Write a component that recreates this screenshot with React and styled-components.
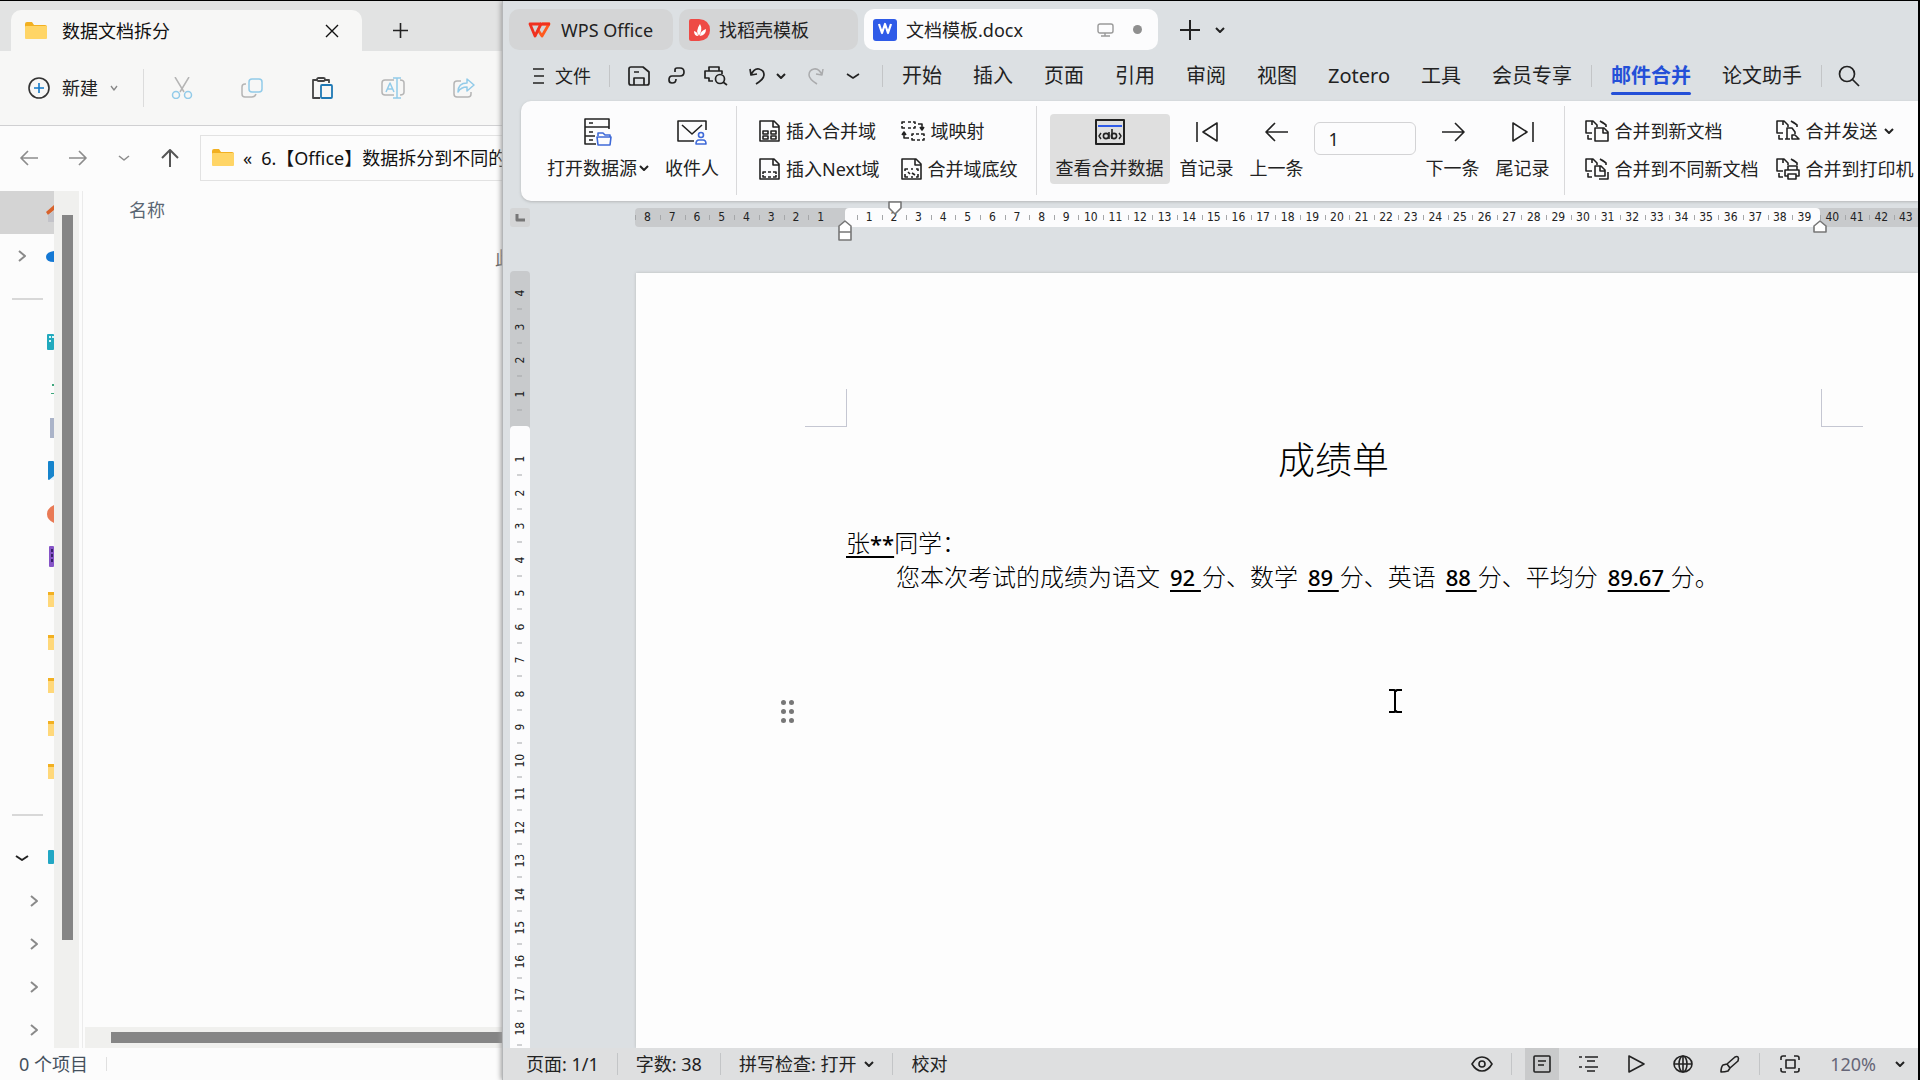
import React, { useState } from "react";
import styled, { createGlobalStyle } from "styled-components";

const GlobalStyle = createGlobalStyle`
  * {
    box-sizing: border-box;
  }
  body {
    margin: 0;
    background: #000;
    font-family: "Noto Sans", "Noto Sans CJK SC", sans-serif;
    font-size: 18px;
    line-height: 24px;
    color: #222;
  }
  button,
  input {
    font: inherit;
    color: inherit;
    background: none;
    border: 0;
    padding: 0;
    margin: 0;
    white-space: nowrap;
  }
  svg {
    display: block;
    flex: none;
    fill: none;
    stroke: currentColor;
  }
`;

/* ---------- icons ---------- */

const Svg = ({ w = 24, h = 24, sw = 2, children }) => (
  <svg
    width={w}
    height={h}
    viewBox={`0 0 ${w} ${h}`}
    strokeWidth={sw}
    strokeLinejoin="round"
    aria-hidden="true"
  >
    {children}
  </svg>
);

const Folder = () => (
  <Svg w={22} h={17}>
    <path d="M0 2q0-2 2-2h5l2 3h11q2 0 2 2v3H0z" fill="#f2b021" stroke="none" />
    <rect y="4" width="22" height="13" rx="1" fill="#ffd566" stroke="none" />
  </Svg>
);

const Caret = ({ w = 10, sw = 2 }) => (
  <Svg w={w} h={6} sw={sw}>
    <path d={`M1 1l${w / 2 - 1} 4 ${w / 2 - 1}-4`} />
  </Svg>
);

const ChevronRight = () => (
  <Svg w={10} h={14}>
    <path d="M2 2l6 5-6 5" />
  </Svg>
);

const Close = () => (
  <Svg w={14} h={14} sw={1.4}>
    <path d="M1 1l12 12M13 1L1 13" />
  </Svg>
);

const Plus = ({ w = 15, sw = 1.6 }) => (
  <Svg w={w} h={w} sw={sw}>
    <path d={`M${w / 2} 0v${w}M0 ${w / 2}h${w}`} />
  </Svg>
);

const Arrow = ({ back }) => (
  <Svg w={24} h={20} sw={1.6}>
    <path d={back ? "M23 10H1M10 1L1 10l9 9" : "M1 10h22M14 1l9 9-9 9"} />
  </Svg>
);

const SmallArrow = ({ back }) => (
  <Svg w={18} h={16} sw={1.7}>
    <path d={back ? "M18 8H1M8 1L1 8l7 7" : "M0 8h17M10 1l7 7-7 7"} />
  </Svg>
);

const ArrowUp = () => (
  <Svg w={18} h={18} sw={2}>
    <path d="M9 18V1M1 9l8-8 8 8" />
  </Svg>
);

const NewItem = () => (
  <Svg w={22} h={22} sw={1.6}>
    <circle cx="11" cy="11" r="10" stroke="#333" />
    <path d="M11 6v10M6 11h10" stroke="#1279c9" />
  </Svg>
);

const Cut = () => (
  <Svg w={22} h={22} sw={1.5}>
    <path d="M4 0l9 15M18 0L9 15" stroke="#b5b5b5" />
    <circle cx="5" cy="18" r="3.5" stroke="#92cbe9" />
    <circle cx="17" cy="18" r="3.5" stroke="#92cbe9" />
  </Svg>
);

const Copy = () => (
  <Svg w={22} h={20} sw={1.5}>
    <path d="M5 6H4q-3 0-3 3v7q0 3 3 3h7q3 0 4-3" stroke="#b5b5b5" />
    <rect x="8" y="1" width="13" height="13" rx="3" stroke="#92cbe9" />
  </Svg>
);

const Paste = () => (
  <Svg w={22} h={22} sw={1.8}>
    <path d="M6 3H2v18h7M14 3h4v3" stroke="#444" />
    <rect x="6" y="1" width="8" height="3" rx="1.5" stroke="#444" />
    <rect x="10" y="8" width="11" height="13" rx="1" stroke="#1e78b4" />
  </Svg>
);

const Rename = () => (
  <Svg w={24} h={22} sw={1.5}>
    <path d="M13 3H4Q1 3 1 6v9q0 3 3 3h9M19 3q4 0 4 3v9q0 3-4 3" stroke="#b5b5b5" />
    <path d="M5 15l4-9 4 9M6 12h6" stroke="#92cbe9" />
    <path d="M16 1v20M12 1h8M12 21h8" stroke="#92cbe9" />
  </Svg>
);

const Share = () => (
  <Svg w={22} h={20} sw={1.5}>
    <path d="M8 3H4Q1 3 1 6v10q0 3 3 3h11q3 0 3-3v-2" stroke="#b5b5b5" />
    <path d="M14 1l7 6-7 6v-4q-6 0-9 5 0-9 9-9z" stroke="#92cbe9" />
  </Svg>
);

const WpsLogo = () => (
  <Svg w={24} h={16} sw={2.8}>
    <path d="M10 8l4 6 7-12h-7" stroke="#ff5a1f" />
    <path d="M13 2H2l5 12 6-12" stroke="#f0301f" />
    <path d="M12 2h10" stroke="#f0301f" />
  </Svg>
);

const DocerLogo = () => (
  <Svg w={21} h={22}>
    <path d="M2 0h8q11 1 11 11T10 22H2q-2 0-2-2V2q0-2 2-2z" fill="#ee4a45" stroke="none" />
    <path d="M10 17q-4-5 1-12 3 5-1 12zM9 17q-4 0-4-5 4 1 4 5zM11 17q0-5 6-7 0 6-6 7z" fill="#fff" stroke="none" />
  </Svg>
);

const WriterLogo = () => (
  <Svg w={24} h={22}>
    <rect width="24" height="22" rx="3" fill="#2f5be8" stroke="none" />
    <path d="M6 5l3 9 3-9 3 9 3-9" stroke="#fff" strokeWidth="2.2" />
  </Svg>
);

const Monitor = () => (
  <Svg w={17} h={14} sw={1.4}>
    <rect x="1" y="1" width="15" height="9" rx="2" />
    <path d="M8 10v3M4 13h9" />
  </Svg>
);

const Hamburger = () => (
  <Svg w={13} h={16} sw={1.5}>
    <path d="M1 1h11M2 8h10M1 15h11" />
  </Svg>
);

const Save = () => (
  <Svg w={22} h={20} sw={1.7}>
    <path d="M3 1h12l6 5v11q0 2-2 2H3q-2 0-2-2V3q0-2 2-2z" />
    <path d="M6 19v-7h10v7M6 6h5" />
  </Svg>
);

const Export = () => (
  <Svg w={18} h={18} sw={1.7}>
    <path d="M7 5V3q0-2 2-2h3q4 0 4 4t-4 4H4q-3 0-3 4 0 3 3 3 4 0 4-4" />
  </Svg>
);

const Preview = () => (
  <Svg w={24} h={20} sw={1.7}>
    <path d="M5 5V1h10v4M9 15H5v-3H1V5h17v3" />
    <circle cx="16" cy="13" r="4.5" />
    <path d="M19 16l4 3" />
  </Svg>
);

const Undo = () => (
  <Svg w={16} h={18} sw={1.7}>
    <path d="M1 2l1 6 6-1M2 8q3-7 8-6 5 1 5 6 0 4-8 9" />
  </Svg>
);

const Redo = () => (
  <Svg w={16} h={18} sw={1.5}>
    <path d="M15 2l-1 6-6-1M14 8q-3-7-8-6-5 1-5 6 0 4 8 9" />
  </Svg>
);

const Search = () => (
  <Svg w={22} h={22} sw={1.7}>
    <circle cx="9" cy="9" r="7.5" />
    <path d="M14 14l7 7" />
  </Svg>
);

const DataSource = () => (
  <Svg w={28} h={28} sw={1.6}>
    <path d="M25 11V1H1v25h11M1 9h24M1 18h10M5 5h4M5 14h4M5 22h4" />
    <path d="M14 18v-3h5l2 2h5v2M13 19h14l-1 8H14z" stroke="#3f6ad8" />
  </Svg>
);

const Recipients = () => (
  <Svg w={30} h={26} sw={1.6}>
    <path d="M29 11V2H1v20h16M5 6l10 9 10-9" />
    <circle cx="24" cy="16" r="2.5" stroke="#3f6ad8" />
    <path d="M19 25q0-4 3-4h4q3 0 3 4z" stroke="#3f6ad8" />
  </Svg>
);

const SheetOutline = <path d="M1 1h14l5 5v15H1zM14 1v6h6" />;

const MergeField = () => (
  <Svg w={21} h={22} sw={1.6}>
    {SheetOutline}
    <path d="M4 11h5v3H4zM12 11h5v3h-5zM4 16h5v3H4zM12 16h5v3h-5z" />
  </Svg>
);

const NextField = () => (
  <Svg w={21} h={22} sw={1.6}>
    {SheetOutline}
    <path d="M4 16v-2h3M9 14h3M14 14h3v2M4 17v2h3M9 19h3M14 19h3v-2" />
  </Svg>
);

const Shading = () => (
  <Svg w={21} h={22} sw={1.6}>
    {SheetOutline}
    <path d="M4 13v-2h3M10 11h2M15 11h2v2M4 16v3h3M10 19h2M15 19h2v-3M7 14l2 2M11 15l3 2" />
  </Svg>
);

const MapField = () => (
  <Svg w={24} h={20} sw={1.6}>
    <path d="M4 1H1v2M7 1h3M12 1h2v2M1 5v2h3M7 7h3M12 7h2V5M17 3h4v5M19 6l2 3 2-3" />
    <path d="M13 13h-2v2M15 13h3M20 13h3v2M11 17v2h3M16 19h3M21 19h2v-2M8 17H3v-5M1 14l2-3 2 3" />
  </Svg>
);

const ViewMerged = () => (
  <Svg w={30} h={26} sw={2}>
    <rect x="1" y="1" width="28" height="24" />
    <path d="M3 7h24" stroke="#2f5be8" />
    <path d="M6 14l-2 3 2 3M24 14l2 3-2 3" strokeWidth="1.4" />
    <circle cx="11" cy="17" r="2.6" strokeWidth="1.6" />
    <path d="M14 13v7M17 10v10" strokeWidth="1.6" />
    <circle cx="19" cy="17" r="2.6" strokeWidth="1.6" />
  </Svg>
);

const FirstRecord = () => (
  <Svg w={22} h={20} sw={1.6}>
    <path d="M1 0v20M21 1v18L7 10z" />
  </Svg>
);

const LastRecord = () => (
  <Svg w={22} h={20} sw={1.6}>
    <path d="M21 0v20M1 1v18l14-9z" />
  </Svg>
);

const MergeBase = (
  <path d="M7 13H1V1h7l4 4v2M7 1v4M17 2l4 3v2M3 15v4h4M15 1l3 2" />
);

const MergeNew = () => (
  <Svg w={24} h={22} sw={1.6}>
    {MergeBase}
    <path d="M10 8h9l4 4v9H10zM18 8v5h5" />
  </Svg>
);

const MergeSplit = () => (
  <Svg w={24} h={22} sw={1.6}>
    {MergeBase}
    <path d="M10 8h6l4 4v6H10zM15 8v5h5M23 14v7H14" />
  </Svg>
);

const MergeSend = () => (
  <Svg w={24} h={22} sw={1.6}>
    {MergeBase}
    <path d="M11 19V8h5l3 4v2M9 19h5M16 15v4h7l-4-4z" />
  </Svg>
);

const MergePrint = () => (
  <Svg w={24} h={22} sw={1.6}>
    {MergeBase}
    <path d="M12 12V8h9v4M12 18H9v-6h14v6h-3M12 16h8v5h-8z" />
  </Svg>
);

const Eye = () => (
  <Svg w={22} h={16} sw={1.6}>
    <path d="M1 8q4-7 10-7t10 7q-4 7-10 7T1 8z" />
    <circle cx="11" cy="8" r="3" />
  </Svg>
);

const PageView = () => (
  <Svg w={18} h={18} sw={1.6}>
    <rect x="1" y="1" width="16" height="16" rx="1" />
    <path d="M5 6h8M5 10h6" />
  </Svg>
);

const Outline = () => (
  <Svg w={20} h={16} sw={1.7}>
    <path d="M0 1h3M6 1h13M8 5h8M0 11h3M6 11h13M8 15h8" />
  </Svg>
);

const Play = () => (
  <Svg w={17} h={18} sw={1.6}>
    <path d="M1 1v16l15-8z" />
  </Svg>
);

const Globe = () => (
  <Svg w={20} h={18} sw={1.6}>
    <ellipse cx="10" cy="9" rx="9" ry="8" />
    <ellipse cx="10" cy="9" rx="4" ry="8" />
    <path d="M1 9h18M10 1v16" />
  </Svg>
);

const Pen = () => (
  <Svg w={20} h={18} sw={1.6}>
    <path d="M1 17q0-5 2-7l4-1 3 4-2 3q-3 1-7 1zM7 9l8-7q2-1 3 0t0 4l-8 7M7 9l3 4" />
  </Svg>
);

const Focus = () => (
  <Svg w={20} h={18} sw={1.6}>
    <path d="M1 5V3q0-2 2-2h3M14 1h3q2 0 2 2v2M19 13v2q0 2-2 2h-3M6 17H3q-2 0-2-2v-2" />
    <rect x="6" y="5" width="9" height="8" />
  </Svg>
);

const IBeam = () => (
  <Svg w={15} h={24} sw={2}>
    <path d="M1 1h5l2 1 1-1h5M1 23h5l2-1 1 1h5M7 2v20" />
  </Svg>
);

/* ---------- data ---------- */

const sidebarRows = [
  { kind: "home", selected: true },
  { kind: "cloud", arrow: "right" },
  { rule: true },
  { kind: "desktop" },
  { kind: "download" },
  { kind: "document" },
  { kind: "picture" },
  { kind: "music" },
  { kind: "video" },
  { kind: "folder" },
  { kind: "folder" },
  { kind: "folder" },
  { kind: "folder" },
  { kind: "folder" },
  { rule: true },
  { kind: "pc", arrow: "down" },
  { arrow: "right", nested: true },
  { arrow: "right", nested: true },
  { arrow: "right", nested: true },
  { arrow: "right", nested: true },
];

const menus = ["开始", "插入", "页面", "引用", "审阅", "视图", "Zotero", "工具", "会员专享"];

const range = (from, to) => {
  const step = from < to ? 1 : -1;
  const list = [];
  for (let n = from; n !== to + step; n += step) list.push(n);
  return list;
};

/* ---------- file explorer ---------- */

const SideIcon = ({ kind }) => (
  <Svg w={8} h={24}>
    <g stroke="none">
      {kind === "home" && (
        <>
          <path d="M0 11l8-7v5l-6 5z" fill="#d8622b" />
          <path d="M2 14l6-4v11H2z" fill="#c3c3c9" />
        </>
      )}
      {kind === "cloud" && <path d="M8 7Q0 8 0 13t8 5z" fill="#1478d4" />}
      {kind === "desktop" && (
        <>
          <rect x="1" y="4" width="7" height="16" rx="1" fill="#21a9bd" />
          <path d="M3 6h2v2H3zM3 10h2v2H3zM6 6h2v2H6z" fill="#d8f6f8" />
        </>
      )}
      {kind === "download" && <path d="M6 11h2v2H6zM5 20h3v1H5z" fill="#3fa77c" />}
      {kind === "document" && <rect x="4" y="2" width="4" height="20" fill="#aab3c8" />}
      {kind === "picture" && (
        <>
          <rect x="2" y="2" width="6" height="19" rx="1" fill="#1684cc" />
          <path d="M3 21l5-4v4z" fill="#e6f5ff" />
        </>
      )}
      {kind === "music" && <path d="M8 3Q1 6 1 12t7 9z" fill="#e97a55" />}
      {kind === "video" && (
        <>
          <rect x="3" y="1" width="5" height="21" rx="1" fill="#8654c7" />
          <path d="M5 4h2v3H5zM5 9h2v3H5zM5 14h2v3H5z" fill="#38206b" />
        </>
      )}
      {kind === "folder" && (
        <>
          <rect x="2" y="4" width="6" height="4" fill="#f2b021" />
          <rect x="2" y="7" width="6" height="12" fill="#ffd87a" />
        </>
      )}
      {kind === "pc" && <rect x="2" y="4" width="6" height="14" rx="1" fill="#22a7c4" />}
    </g>
  </Svg>
);

const Explorer = () => (
  <ExplorerWindow>
    <ExplorerTabs>
      <ExplorerTab>
        <Folder />
        <TabTitle>数据文档拆分</TabTitle>
        <button aria-label="关闭标签页">
          <Close />
        </button>
      </ExplorerTab>
      <NewTab aria-label="新标签页">
        <Plus />
      </NewTab>
    </ExplorerTabs>
    <ExplorerTools>
      <NewButton>
        <NewItem />
        新建
        <Caret w={8} sw={1.3} />
      </NewButton>
      <ToolRow>
        <button aria-label="剪切"><Cut /></button>
        <button aria-label="复制"><Copy /></button>
        <button aria-label="粘贴"><Paste /></button>
        <button aria-label="重命名"><Rename /></button>
        <button aria-label="共享"><Share /></button>
      </ToolRow>
    </ExplorerTools>
    <AddressRow>
      <NavButton aria-label="后退"><SmallArrow back /></NavButton>
      <NavButton aria-label="前进"><SmallArrow /></NavButton>
      <NavButton aria-label="最近"><Caret w={12} sw={1.6} /></NavButton>
      <NavButton aria-label="上移" $dark><ArrowUp /></NavButton>
      <Address>
        <Folder />
        <span>«</span>
        <span>6.【Office】数据拆分到不同的文档</span>
      </Address>
    </AddressRow>
    <ExplorerBody>
      <Sidebar>
        {sidebarRows.map((row, i) => (
          <SideRow key={i} $selected={row.selected} $nested={row.nested}>
            {row.rule && <SideRule />}
            {row.arrow && (
              <Twist $dark={row.arrow === "down"}>
                {row.arrow === "down" ? <Caret w={14} /> : <ChevronRight />}
              </Twist>
            )}
            {row.kind && (
              <SideKind>
                <SideIcon kind={row.kind} />
              </SideKind>
            )}
          </SideRow>
        ))}
      </Sidebar>
      <SideScroll>
        <SideThumb />
      </SideScroll>
      <FilePane>
        <ColumnHead>名称</ColumnHead>
        <EmptyNote>此文件夹为空。</EmptyNote>
        <PaneScroll>
          <PaneThumb />
        </PaneScroll>
      </FilePane>
    </ExplorerBody>
    <ExplorerStatus>
      0 个项目
      <StatusTick />
    </ExplorerStatus>
  </ExplorerWindow>
);

/* ---------- writer ---------- */

const BigTool = ({ icon, label, caret, active }) => (
  <BigButton $active={active}>
    <BigIcon>{icon}</BigIcon>
    <BigLabel>
      {label}
      {caret && <Caret />}
    </BigLabel>
  </BigButton>
);

const SmallTool = ({ icon, label, caret }) => (
  <SmallButton>
    {icon}
    <span>{label}</span>
    {caret && <Caret />}
  </SmallButton>
);

const Ribbon = () => {
  const [record, setRecord] = useState("1");

  return (
    <RibbonPanel>
      <Group $gap={4} $left={20} $right={11}>
        <BigTool icon={<DataSource />} label="打开数据源" caret />
        <BigTool icon={<Recipients />} label="收件人" />
      </Group>
      <Group $gap={21} $left={22} $right={18}>
        <Stack>
          <SmallTool icon={<MergeField />} label="插入合并域" />
          <SmallTool icon={<NextField />} label="插入Next域" />
        </Stack>
        <Stack>
          <SmallTool icon={<MapField />} label="域映射" />
          <SmallTool icon={<Shading />} label="合并域底纹" />
        </Stack>
      </Group>
      <Group $gap={4} $left={13} $right={8}>
        <BigTool icon={<ViewMerged />} label="查看合并数据" active />
        <BigTool icon={<FirstRecord />} label="首记录" />
        <BigTool icon={<Arrow back />} label="上一条" />
        <RecordInput
          aria-label="记录编号"
          value={record}
          onChange={(e) => setRecord(e.target.value)}
        />
        <BigTool icon={<Arrow />} label="下一条" />
        <BigTool icon={<LastRecord />} label="尾记录" />
      </Group>
      <Group $gap={17} $left={20} $right={0}>
        <Stack>
          <SmallTool icon={<MergeNew />} label="合并到新文档" />
          <SmallTool icon={<MergeSplit />} label="合并到不同新文档" />
        </Stack>
        <Stack>
          <SmallTool icon={<MergeSend />} label="合并发送" caret />
          <SmallTool icon={<MergePrint />} label="合并到打印机" />
        </Stack>
      </Group>
    </RibbonPanel>
  );
};

const HorizontalRuler = () => (
  <RulerRow>
    <TabStop aria-label="制表位">
      <Svg w={10} h={8} sw={3}>
        <path d="M2 0v6h8" />
      </Svg>
    </TabStop>
    <Ruler>
      <RulerPart $size="210px" $pad="0 12px 0 0">
        {range(8, 1).map((n) => (
          <Mark key={n}>{n}</Mark>
        ))}
      </RulerPart>
      <RulerPart $white $pad="0 3px 0 12px">
        {range(1, 39).map((n) => (
          <Mark key={n}>{n}</Mark>
        ))}
        <Indent $left={42} $top={-7}>
          <Svg w={16} h={14} sw={1.6}>
            <path d="M2 1h12v6l-6 6-6-6z" fill="#fff" />
          </Svg>
        </Indent>
        <Indent $left={-8} $top={12}>
          <Svg w={16} h={22} sw={1.6}>
            <path d="M8 1l6 5v6H2V6zM2 12h12v8H2z" fill="#fff" />
          </Svg>
        </Indent>
        <Indent $right={-8} $top={12}>
          <Svg w={16} h={13} sw={1.6}>
            <path d="M8 1l6 5v6H2V6z" fill="#fff" />
          </Svg>
        </Indent>
      </RulerPart>
      <RulerPart $size="98px" $pad="0">
        {range(40, 43).map((n) => (
          <Mark key={n}>{n}</Mark>
        ))}
      </RulerPart>
    </Ruler>
  </RulerRow>
);

const VerticalRuler = () => (
  <SideRuler>
    <SideRulerPart $size="155px" $pad="5px 0 16px">
      {range(4, 1).map((n) => (
        <SideMark key={n}>{n}</SideMark>
      ))}
    </SideRulerPart>
    <SideRulerPart $white $pad="16px 0 3px">
      {range(1, 18).map((n) => (
        <SideMark key={n}>{n}</SideMark>
      ))}
    </SideRulerPart>
  </SideRuler>
);

const Writer = () => (
  <WriterWindow>
    <WriterTabs>
      <WriterTab $width={164} $pad={19}>
        <WpsLogo />
        <span>WPS Office</span>
      </WriterTab>
      <WriterTab $width={179} $pad={10}>
        <DocerLogo />
        <span>找稻壳模板</span>
      </WriterTab>
      <WriterTab $width={294} $pad={9} $active>
        <WriterLogo />
        <TabTitle>文档模板.docx</TabTitle>
        <Muted>
          <Monitor />
          <Unsaved />
        </Muted>
      </WriterTab>
      <AddTab aria-label="新建标签">
        <Plus w={20} sw={2} />
      </AddTab>
      <AddTab aria-label="标签列表">
        <Caret />
      </AddTab>
    </WriterTabs>

    <MenuBar>
      <FileButton>
        <Hamburger />
        文件
      </FileButton>
      <Rule />
      <QuickTools>
        <button aria-label="保存"><Save /></button>
        <button aria-label="输出"><Export /></button>
        <button aria-label="打印预览"><Preview /></button>
      </QuickTools>
      <HistoryTools>
        <button aria-label="撤销"><Undo /></button>
        <button aria-label="撤销列表"><Caret /></button>
        <Faded aria-label="恢复"><Redo /></Faded>
        <button aria-label="更多"><Caret w={14} sw={1.6} /></button>
      </HistoryTools>
      <Rule />
      <MenuGroup>
        {menus.map((name) => (
          <MenuItem key={name}>{name}</MenuItem>
        ))}
      </MenuGroup>
      <Rule />
      <MenuGroup>
        <MenuItem $active>邮件合并</MenuItem>
        <MenuItem>论文助手</MenuItem>
      </MenuGroup>
      <Rule />
      <SearchButton aria-label="搜索">
        <Search />
      </SearchButton>
    </MenuBar>

    <Ribbon />
    <HorizontalRuler />

    <Workspace>
      <VerticalRuler />
      <Page>
        <Corners>
          <Corner $side="right" />
          <Corner $side="left" />
        </Corners>
        <Title>成绩单</Title>
        <Line>
          <u>
            张<b>**</b>
          </u>
          同学：
        </Line>
        <Line $indent>
          您本次考试的成绩为语文<Score>92 </Score>分、数学<Score>89 </Score>
          分、英语<Score>88 </Score>分、平均分<Score>89.67 </Score>分。
        </Line>
        <DragHandle>
          {range(1, 6).map((n) => (
            <i key={n} />
          ))}
        </DragHandle>
        <Pointer>
          <IBeam />
        </Pointer>
      </Page>
    </Workspace>

    <StatusBar>
      <StatusText>页面: 1/1</StatusText>
      <Rule />
      <StatusText>字数: 38</StatusText>
      <Rule />
      <StatusText>
        拼写检查: 打开
        <Caret />
      </StatusText>
      <Rule />
      <StatusText>校对</StatusText>
      <Spacer />
      <StatusIcon aria-label="护眼模式"><Eye /></StatusIcon>
      <Rule $gap={6} />
      <StatusIcon aria-label="页面视图" $active><PageView /></StatusIcon>
      <StatusIcon aria-label="大纲"><Outline /></StatusIcon>
      <StatusIcon aria-label="放映"><Play /></StatusIcon>
      <StatusIcon aria-label="Web 版式"><Globe /></StatusIcon>
      <StatusIcon aria-label="写作模式"><Pen /></StatusIcon>
      <Rule $gap={6} />
      <StatusIcon aria-label="最佳显示"><Focus /></StatusIcon>
      <Zoom>
        <span>120%</span>
        <Caret />
      </Zoom>
    </StatusBar>
  </WriterWindow>
);

const App = () => (
  <>
    <GlobalStyle />
    <Desktop>
      <Explorer />
      <Writer />
    </Desktop>
  </>
);

const Desktop = styled.div`
  display: flex;
  height: 100vh;
  padding: 1px 2px 0 0;
  overflow: hidden;
  background: #000;
`;

const ExplorerWindow = styled.section`
  display: flex;
  flex-direction: column;
  flex: 0 0 502px;
  min-width: 0;
  overflow: hidden;
  background: #fcfcfc;
`;

const ExplorerTabs = styled.div`
  display: flex;
  height: 50px;
  padding: 9px 0 0 11px;
  background: #e2e3e3;
`;

const ExplorerTab = styled.div`
  display: flex;
  align-items: center;
  width: 351px;
  padding: 0 23px 0 14px;
  gap: 15px;
  border-radius: 10px 10px 0 0;
  background: #f7f7f6;
  color: #111;
`;

const TabTitle = styled.span`
  flex: 1;
  white-space: nowrap;
`;

const NewTab = styled.button`
  display: flex;
  align-items: center;
  padding: 0 31px;
`;

const ExplorerTools = styled.div`
  display: flex;
  align-items: center;
  height: 75px;
  padding-left: 28px;
  background: #f7f7f6;
  border-bottom: 1px solid #d0d0d2;
`;

const NewButton = styled.button`
  display: flex;
  align-items: center;
  gap: 12px;
  height: 38px;
  padding-right: 25px;
  border-right: 1px solid #dcdcdc;
  svg:last-child {
    color: #888;
  }
`;

const ToolRow = styled.div`
  display: flex;
  gap: 48px;
  padding-left: 27px;
`;

const AddressRow = styled.div`
  display: flex;
  align-items: center;
  height: 65px;
  padding: 0 0 2px 20px;
`;

const NavButton = styled.button`
  display: flex;
  align-items: center;
  flex: 0 0 auto;
  margin-right: ${(p) => (p.$dark ? 21 : 31)}px;
  color: ${(p) => (p.$dark ? "#555" : "#8c8c8c")};
`;

const Address = styled.div`
  display: flex;
  align-items: center;
  flex: 1 0 auto;
  gap: 9px;
  height: 46px;
  padding-left: 11px;
  border: 1px solid #e2e2e2;
  color: #111;
  white-space: nowrap;
`;

const ExplorerBody = styled.div`
  display: flex;
  flex: 1;
  min-height: 0;
`;

const Sidebar = styled.nav`
  width: 54px;
  overflow: hidden;
`;

const SideRow = styled.div`
  display: flex;
  align-items: center;
  height: 43px;
  padding-left: ${(p) => (p.$nested ? 29 : 0)}px;
  background: ${(p) => (p.$selected ? "#d4d4d4" : "transparent")};
`;

const SideRule = styled.hr`
  width: 31px;
  margin: 0 0 0 12px;
  border: 0;
  border-top: 2px solid #d8d8d8;
`;

const Twist = styled.span`
  ${SideRow} > &:not(:last-child) {
    padding-left: ${(p) => (p.$dark ? 15 : 17)}px;
  }
  color: ${(p) => (p.$dark ? "#222" : "#8a8a8a")};
`;

const SideKind = styled.span`
  margin-left: auto;
`;

const SideScroll = styled.div`
  width: 25px;
  padding: 24px 6px 0 8px;
  background: #f0f0ee;
`;

const SideThumb = styled.div`
  height: 87%;
  background: #858585;
`;

const FilePane = styled.div`
  display: flex;
  flex-direction: column;
  flex: 1;
  min-width: 0;
  margin-left: 3px;
  border-left: 1px solid #ebebeb;
`;

const ColumnHead = styled.div`
  padding: 7px 0 0 46px;
  color: #5a6673;
`;

const EmptyNote = styled.div`
  flex: 1;
  padding: 24px 0 0 412px;
  white-space: nowrap;
  overflow: hidden;
  color: #666;
`;

const PaneScroll = styled.div`
  height: 21px;
  padding: 5px 0 5px 26px;
  margin-left: 2px;
  background: #f0f0ee;
`;

const PaneThumb = styled.div`
  height: 11px;
  background: #858585;
`;

const ExplorerStatus = styled.footer`
  display: flex;
  align-items: center;
  gap: 18px;
  height: 32px;
  padding-left: 19px;
  color: #44505c;
`;

const StatusTick = styled.i`
  width: 1px;
  height: 14px;
  background: #e0e0e0;
`;

const WriterWindow = styled.main`
  position: relative;
  display: flex;
  flex-direction: column;
  flex: 1;
  min-width: 0;
  overflow: hidden;
  background: #dce0e3;
  border-left: 1px solid #b4b6b8;
  clip-path: inset(0 0 0 -8px);
  box-shadow: -1px 0 5px #9a9a9a;
`;

const WriterTabs = styled.div`
  display: flex;
  align-items: center;
  gap: 6px;
  height: 57px;
  padding: 0 0 0 6px;
`;

const WriterTab = styled.div`
  display: flex;
  align-items: center;
  gap: 9px;
  width: ${(p) => p.$width}px;
  height: 41px;
  padding: 0 16px 0 ${(p) => p.$pad}px;
  border-radius: 10px;
  background: ${(p) => (p.$active ? "#fcfcfd" : "#d4d5d6")};
  white-space: nowrap;
`;

const Muted = styled.span`
  display: flex;
  align-items: center;
  gap: 19px;
  color: #999;
`;

const Unsaved = styled.i`
  width: 9px;
  height: 9px;
  border-radius: 50%;
  background: #8f8f8f;
`;

const AddTab = styled.button`
  display: flex;
  align-items: center;
  padding-left: 16px;
  & + & {
    padding-left: 9px;
  }
`;

const MenuBar = styled.nav`
  display: flex;
  align-items: center;
  height: 43px;
  padding: 0 0 7px 29px;
`;

const Rule = styled.i`
  flex: 0 0 1px;
  height: 22px;
  margin: 0 ${(p) => p.$gap || 0}px;
  background: #c3c5c7;
`;

const FileButton = styled.button`
  display: flex;
  align-items: center;
  gap: 10px;
  padding-right: 18px;
`;

const QuickTools = styled.div`
  display: flex;
  align-items: center;
  gap: 18px;
  padding-left: 18px;
`;

const HistoryTools = styled.div`
  display: flex;
  align-items: center;
  padding: 0 22px 0 21px;
  gap: 11px;
  button:nth-child(n + 3) {
    padding-left: 11px;
  }
`;

const Faded = styled.button`
  color: #aaabad;
`;

const MenuGroup = styled.div`
  display: flex;
  gap: 31px;
  padding: 0 19px;
`;

const MenuItem = styled.button`
  position: relative;
  font-size: 20px;
  line-height: 30px;
  color: ${(p) => (p.$active ? "#2450d8" : "inherit")};
  font-weight: ${(p) => (p.$active ? 700 : 400)};
  &::after {
    content: "";
    display: ${(p) => (p.$active ? "block" : "none")};
    position: absolute;
    left: 0;
    right: 0;
    bottom: -4px;
    height: 3px;
    border-radius: 2px;
    background: #2450d8;
  }
`;

const SearchButton = styled.button`
  padding-left: 16px;
`;

const RibbonPanel = styled.div`
  display: flex;
  height: 100px;
  margin-left: 18px;
  overflow: hidden;
  border-radius: 10px 0 0 10px;
  background: #fcfcfd;
  box-shadow: 0 1px 3px #b5b7b9;
`;

const Group = styled.div`
  display: flex;
  align-items: flex-start;
  flex: none;
  gap: ${(p) => p.$gap}px;
  margin-top: 5px;
  height: 89px;
  padding: 8px ${(p) => p.$right}px 0 ${(p) => p.$left}px;
  border-right: 1px solid #d9d9db;
  &:last-child {
    border-right: 0;
  }
`;

const BigButton = styled.button`
  display: flex;
  flex-direction: column;
  align-items: center;
  height: 70px;
  padding: 0 6px;
  border-radius: 4px;
  background: ${(p) => (p.$active ? "#dfdfdf" : "none")};
`;

const BigIcon = styled.span`
  display: flex;
  align-items: center;
  height: 35px;
`;

const BigLabel = styled.span`
  display: flex;
  align-items: center;
  gap: 2px;
  padding-top: 7px;
`;

const Stack = styled.div`
  display: flex;
  flex-direction: column;
  gap: 14px;
  padding-top: 5px;
`;

const SmallButton = styled.button`
  display: flex;
  align-items: center;
  gap: 6px;
  height: 24px;
`;

const RecordInput = styled.input`
  width: 102px;
  height: 33px;
  margin-top: 8px;
  padding-left: 14px;
  border: 1px solid #d3d3d5;
  border-radius: 6px;
`;

const RulerRow = styled.div`
  display: flex;
  padding: 7px 0 0 7px;
`;

const TabStop = styled.button`
  display: flex;
  align-items: center;
  justify-content: center;
  width: 20px;
  height: 19px;
  margin-right: 105px;
  border-radius: 3px;
  background: #d4d5d6;
  color: #777;
`;

const Ruler = styled.div`
  display: flex;
  flex: 1;
  font-family: "DejaVu Sans Condensed", "DejaVu Sans", sans-serif;
  font-size: 12px;
  line-height: 19px;
  background: #c8cacc;
  border-radius: 4px 0 0 4px;
`;

const RulerPart = styled.div`
  position: relative;
  display: flex;
  flex: ${(p) => (p.$size ? `0 0 ${p.$size}` : "1")};
  padding: ${(p) => p.$pad};
  border-radius: 4px;
  background: ${(p) => (p.$white ? "#fcfcfd" : "none")};
`;

const Mark = styled.span`
  flex: 1 1 0;
  min-width: 0;
  text-align: center;
  background: linear-gradient(#a5a7a9, #a5a7a9) left center / 1px 5px no-repeat;
`;

const Indent = styled.span`
  position: absolute;
  z-index: 1;
  top: ${(p) => p.$top}px;
  left: ${(p) => (p.$left === undefined ? "auto" : `${p.$left}px`)};
  right: ${(p) => (p.$right === undefined ? "auto" : `${p.$right}px`)};
  color: #777;
`;

const Workspace = styled.div`
  display: flex;
  flex: 1;
  min-height: 0;
  padding: 44px 0 0 7px;
`;

const SideRuler = styled.div`
  display: flex;
  flex-direction: column;
  width: 20px;
  margin-right: 106px;
  border-radius: 4px 4px 0 0;
  background: #c8cacc;
  font-family: "DejaVu Sans Condensed", "DejaVu Sans", sans-serif;
  font-size: 12px;
  line-height: 20px;
`;

const SideRulerPart = styled.div`
  display: flex;
  flex-direction: column;
  flex: ${(p) => (p.$size ? `0 0 ${p.$size}` : "1")};
  padding: ${(p) => p.$pad};
  border-radius: 4px 4px 0 0;
  background: ${(p) => (p.$white ? "#fcfcfd" : "none")};
`;

const SideMark = styled.span`
  flex: 1 1 0;
  min-height: 0;
  width: 20px;
  text-align: center;
  writing-mode: vertical-rl;
  transform: rotate(180deg);
  background: linear-gradient(#a5a7a9, #a5a7a9) center top / 5px 1px no-repeat;
`;

const Page = styled.article`
  position: relative;
  flex: 1;
  margin-top: 2px;
  padding: 116px 97px 0 210px;
  background: #fdfdfd;
  box-shadow: 0 0 3px #b8babc;
  color: #000;
`;

const Corners = styled.div`
  display: flex;
  justify-content: space-between;
  margin: 0 -42px 0 -41px;
`;

const Corner = styled.i`
  width: 42px;
  height: 38px;
  border-bottom: 1px solid #c5c7d2;
  border-${(p) => p.$side}: 1px solid #c5c7d2;
`;

const Title = styled.h1`
  margin: 0 0 41px;
  padding-top: 8px;
  font-size: 37px;
  line-height: 50px;
  font-weight: 300;
  text-align: center;
`;

const Line = styled.p`
  margin: 0;
  padding-left: ${(p) => (p.$indent ? 50 : 0)}px;
  font-size: 24px;
  line-height: 34px;
  font-weight: 300;
  white-space: nowrap;
  u {
    text-decoration-thickness: 2px;
    text-underline-offset: 4px;
  }
  b {
    font-size: 22px;
    font-weight: 500;
  }
`;

const Score = styled.u`
  margin: 0 1px 0 10px;
  font-size: 22px;
  font-weight: 500;
  white-space: pre;
`;

const DragHandle = styled.span`
  position: absolute;
  left: 145px;
  top: 427px;
  display: grid;
  grid-template-columns: 5px 5px;
  gap: 4px 3px;
  i {
    height: 5px;
    border-radius: 50%;
    background: #777;
  }
`;

const Pointer = styled.span`
  position: absolute;
  left: 752px;
  top: 416px;
`;

const StatusBar = styled.footer`
  position: relative;
  display: flex;
  align-items: center;
  height: 32px;
  padding-left: 5px;
  background: #dedfe0;
`;

const StatusText = styled.button`
  display: flex;
  align-items: center;
  gap: 8px;
  padding: 0 18px;
`;

const Spacer = styled.span`
  flex: 1;
`;

const StatusIcon = styled.button`
  display: flex;
  align-items: center;
  justify-content: center;
  width: 34px;
  height: 32px;
  margin: 0 6px 0 7px;
  background: ${(p) => (p.$active ? "#c9cacb" : "none")};
`;

const Zoom = styled.button`
  display: flex;
  align-items: center;
  gap: 19px;
  padding: 0 13px 0 17px;
  span {
    color: #667;
  }
`;

export default App;
